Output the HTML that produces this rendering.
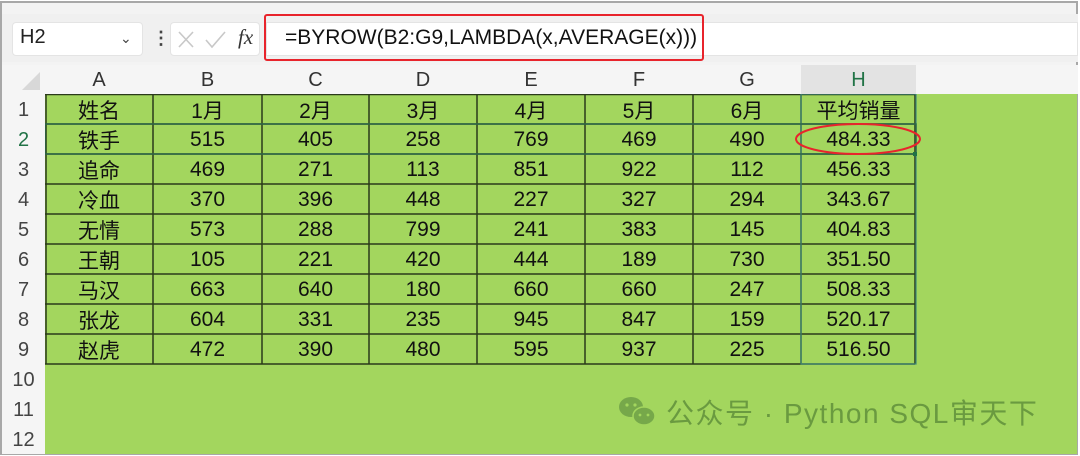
<!DOCTYPE html>
<html><head><meta charset="utf-8"><style>
*{margin:0;padding:0;box-sizing:border-box}
body{width:1080px;height:456px;background:#fff;position:relative;overflow:hidden;font-family:"Liberation Sans","Noto Sans CJK SC",sans-serif}
.a{position:absolute}
.frame{left:0;top:1px;width:1078px;height:454px;border:2px solid #a8a8a8;background:#f3f3f3}
.cell{position:absolute;display:flex;align-items:center;justify-content:center;font-size:21px;color:#111;padding-top:2px}
.hd{color:#333;font-size:20px}
.rh{color:#444;font-size:20px}
</style></head><body>
<div class="a frame"></div>
<div class="a" style="left:2px;top:14px;width:1076px;height:48px;background:#f0f0f0"></div>
<div class="a" style="left:12px;top:22px;width:131px;height:34px;background:#fff;border-radius:4px;border:1px solid #e4e4e4"></div>
<div class="a" style="left:20px;top:26px;font-size:20px;color:#222">H2</div>
<div class="a" style="left:120px;top:30px;font-size:14px;color:#444">&#8964;</div>
<div class="a" style="left:152px;top:28px;font-size:18px;color:#444;font-weight:bold">&#8942;</div>
<div class="a" style="left:170px;top:22px;width:90px;height:34px;background:#fff;border-radius:4px;border:1px solid #e4e4e4"></div>
<svg class="a" style="left:176px;top:29px" width="60" height="22"><path d="M3 3L17 18M17 3L3 18" stroke="#c8c8c8" stroke-width="1.6" fill="none"/><path d="M30 11L36 18L49 3" stroke="#c8c8c8" stroke-width="1.6" fill="none"/></svg>
<div class="a" style="left:238px;top:25px;font-size:21px;font-style:italic;font-family:'Liberation Serif',serif;color:#333">fx</div>
<div class="a" style="left:266px;top:22px;width:812px;height:34px;background:#fff;border:1px solid #e4e4e4"></div>
<div class="a" style="left:264px;top:14px;width:440px;height:47px;border:2px solid #e8242c;border-radius:3px"></div>
<div class="a" style="left:285px;top:26px;font-size:21px;color:#111">=BYROW(B2:G9,LAMBDA(x,AVERAGE(x)))</div>
<div class="a" style="left:2px;top:65px;width:1076px;height:29px;background:#f5f5f5"></div>
<div class="a" style="left:2px;top:94px;width:43px;height:360px;background:#f5f5f5"></div>
<div class="a" style="left:801px;top:65px;width:115px;height:29px;background:#e3e3e3"></div>
<div class="a" style="left:45px;top:94px;width:1032px;height:360px;background:#a3d65e"></div>
<svg class="a" style="left:18px;top:70px" width="24" height="22"><path d="M22 2L22 20L4 20Z" fill="#d8d8d8"/></svg>
<div id="g"></div>
<svg class="a" style="left:45px;top:94px" width="872" height="271">
<g stroke="#2a3a1a" stroke-width="1.5">
<line x1="0" y1="0.5" x2="870" y2="0.5"/>
<line x1="0" y1="30" x2="870" y2="30"/><line x1="0" y1="60" x2="870" y2="60"/><line x1="0" y1="90" x2="870" y2="90"/><line x1="0" y1="120" x2="870" y2="120"/><line x1="0" y1="150" x2="870" y2="150"/><line x1="0" y1="180" x2="870" y2="180"/><line x1="0" y1="210" x2="870" y2="210"/><line x1="0" y1="240" x2="870" y2="240"/><line x1="0" y1="270" x2="870" y2="270"/>
<line x1="1" y1="0" x2="1" y2="270"/><line x1="108" y1="0" x2="108" y2="270"/><line x1="217" y1="0" x2="217" y2="270"/><line x1="324" y1="0" x2="324" y2="270"/><line x1="432" y1="0" x2="432" y2="270"/><line x1="540" y1="0" x2="540" y2="270"/><line x1="648" y1="0" x2="648" y2="270"/><line x1="756" y1="0" x2="756" y2="270"/><line x1="870" y1="0" x2="870" y2="270"/>
</g>
<rect x="756" y="0" width="115" height="270" fill="none" stroke="#3f8a7a" stroke-width="1.2"/>
<rect x="0" y="30" width="871" height="30" fill="none" stroke="#2e6a4a" stroke-width="1.5"/>
<rect x="868" y="58" width="4" height="4" fill="#217346"/>
</svg>
<svg class="a" style="left:792px;top:120px" width="140" height="40"><ellipse cx="66" cy="19" rx="62" ry="15" fill="none" stroke="#e8242c" stroke-width="2"/></svg>
<script>
var cols=[45,153,262,369,477,585,693,801,916],L="ABCDEFGH".split("");
var data=[["姓名","1月","2月","3月","4月","5月","6月","平均销量"],["铁手",515,405,258,769,469,490,"484.33"],["追命",469,271,113,851,922,112,"456.33"],["冷血",370,396,448,227,327,294,"343.67"],["无情",573,288,799,241,383,145,"404.83"],["王朝",105,221,420,444,189,730,"351.50"],["马汉",663,640,180,660,660,247,"508.33"],["张龙",604,331,235,945,847,159,"520.17"],["赵虎",472,390,480,595,937,225,"516.50"]];
var h="";
for(var i=0;i<8;i++){h+='<div class="cell hd" style="left:'+cols[i]+'px;top:65px;width:'+(cols[i+1]-cols[i])+'px;height:29px;'+(i==7?'color:#217346':'')+'">'+L[i]+'</div>';}
for(var r=0;r<12;r++){h+='<div class="cell rh" style="left:2px;top:'+(94+30*r)+'px;width:43px;height:30px;'+(r==1?'color:#217346':'')+'">'+(r+1)+'</div>';}
for(var r=0;r<9;r++)for(var c=0;c<8;c++){h+='<div class="cell" style="left:'+cols[c]+'px;top:'+(94+30*r)+'px;width:'+(cols[c+1]-cols[c])+'px;height:30px">'+data[r][c]+'</div>';}
document.getElementById("g").innerHTML=h;
</script>
<svg class="a" style="left:617px;top:395px" width="42" height="34"><ellipse cx="14" cy="12" rx="12" ry="10" fill="#76a84a"/><ellipse cx="27" cy="21" rx="11" ry="9" fill="#76a84a" stroke="#a3d65e" stroke-width="1.5"/><circle cx="10" cy="10" r="1.6" fill="#a3d65e"/><circle cx="18" cy="10" r="1.6" fill="#a3d65e"/><circle cx="23" cy="20" r="1.4" fill="#a3d65e"/><circle cx="31" cy="20" r="1.4" fill="#a3d65e"/></svg>
<div class="a" style="left:666px;top:392px;font-size:28px;letter-spacing:1.5px;color:#6a9a40;white-space:nowrap">公众号 · Python SQL审天下</div>
</body></html>
